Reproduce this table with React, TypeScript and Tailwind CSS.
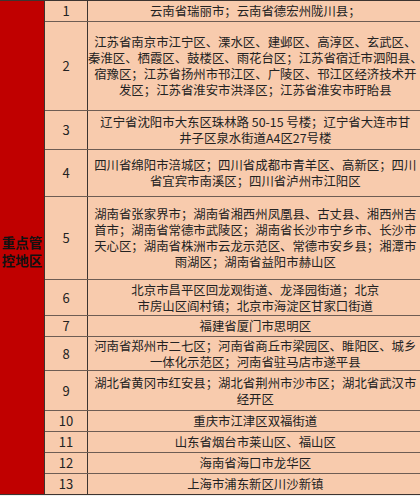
const rows: { n: number; h: string; lines: string[] }[] = [
  { n: 1, h: "h-[21px]", lines: ["云南省瑞丽市；云南省德宏州陇川县；"] },
  {
    n: 2,
    h: "h-[89px]",
    lines: [
      "江苏省南京市江宁区、溧水区、建邺区、高淳区、玄武区、",
      "秦淮区、栖霞区、鼓楼区、雨花台区；江苏省宿迁市泗阳县、",
      "宿豫区；江苏省扬州市邗江区、广陵区、邗江区经济技术开",
      "发区；江苏省淮安市洪泽区；江苏省淮安市盱眙县",
    ],
  },
  {
    n: 3,
    h: "h-[39px]",
    lines: ["辽宁省沈阳市大东区珠林路 50-15 号楼；辽宁省大连市甘", "井子区泉水街道A4区27号楼"],
  },
  {
    n: 4,
    h: "h-[47px]",
    lines: ["四川省绵阳市涪城区；四川省成都市青羊区、高新区；四川", "省宜宾市南溪区；四川省泸州市江阳区"],
  },
  {
    n: 5,
    h: "h-[83px]",
    lines: [
      "湖南省张家界市；湖南省湘西州凤凰县、古丈县、湘西州吉",
      "首市；湖南省常德市武陵区；湖南省长沙市宁乡市、长沙市",
      "天心区；湖南省株洲市云龙示范区、常德市安乡县；湘潭市",
      "雨湖区；湖南省益阳市赫山区",
    ],
  },
  {
    n: 6,
    h: "h-[36px]",
    lines: ["北京市昌平区回龙观街道、龙泽园街道；北京", "市房山区阎村镇；北京市海淀区甘家口街道"],
  },
  { n: 7, h: "h-[21px]", lines: ["福建省厦门市思明区"] },
  {
    n: 8,
    h: "h-[34px]",
    lines: ["河南省郑州市二七区；河南省商丘市梁园区、睢阳区、城乡", "一体化示范区；河南省驻马店市遂平县"],
  },
  {
    n: 9,
    h: "h-[40px]",
    lines: ["湖北省黄冈市红安县；湖北省荆州市沙市区；湖北省武汉市", "经开区"],
  },
  { n: 10, h: "h-[21px]", lines: ["重庆市江津区双福街道"] },
  { n: 11, h: "h-[21px]", lines: ["山东省烟台市莱山区、福山区"] },
  { n: 12, h: "h-[21px]", lines: ["海南省海口市龙华区"] },
  { n: 13, h: "h-[20px]", lines: ["上海市浦东新区川沙新镇"] },
];

export default function App() {
  return (
    <div
      className="h-[496px] w-[420px] overflow-hidden bg-[#eef0ee]"
      style={{ fontFamily: '"Noto Sans CJK SC", "Noto Sans", sans-serif' }}
    >
      <div className="flex border-y border-[#3d3430] bg-[#f8cbad] text-[#222]">
        {/* merged category cell */}
        <div className="flex w-[45px] shrink-0 items-center justify-center border-r border-[#3d3430] bg-[#c00000] pt-[6px]">
          <div className="text-center text-[13.5px] font-bold leading-[18px] text-[#111]">
            重点管
            <br />
            控地区
          </div>
        </div>

        <div className="flex flex-1 flex-col">
          {rows.map((r, i) => (
            <div
              key={r.n}
              className={`flex ${r.h} ${i < rows.length - 1 ? "border-b border-[#6e5d54]" : ""}`}
            >
              <div className="flex w-[43px] shrink-0 items-center justify-center border-r border-[#3d3430] text-[13px]">
                {r.n}
              </div>
              <div className="flex min-w-0 flex-1 flex-col justify-center overflow-hidden text-[12.4px] leading-[16px]">
                {r.lines.map((l) => (
                  <div key={l} className="flex justify-center whitespace-nowrap">
                    {l}
                  </div>
                ))}
              </div>
            </div>
          ))}
        </div>
      </div>
    </div>
  );
}
